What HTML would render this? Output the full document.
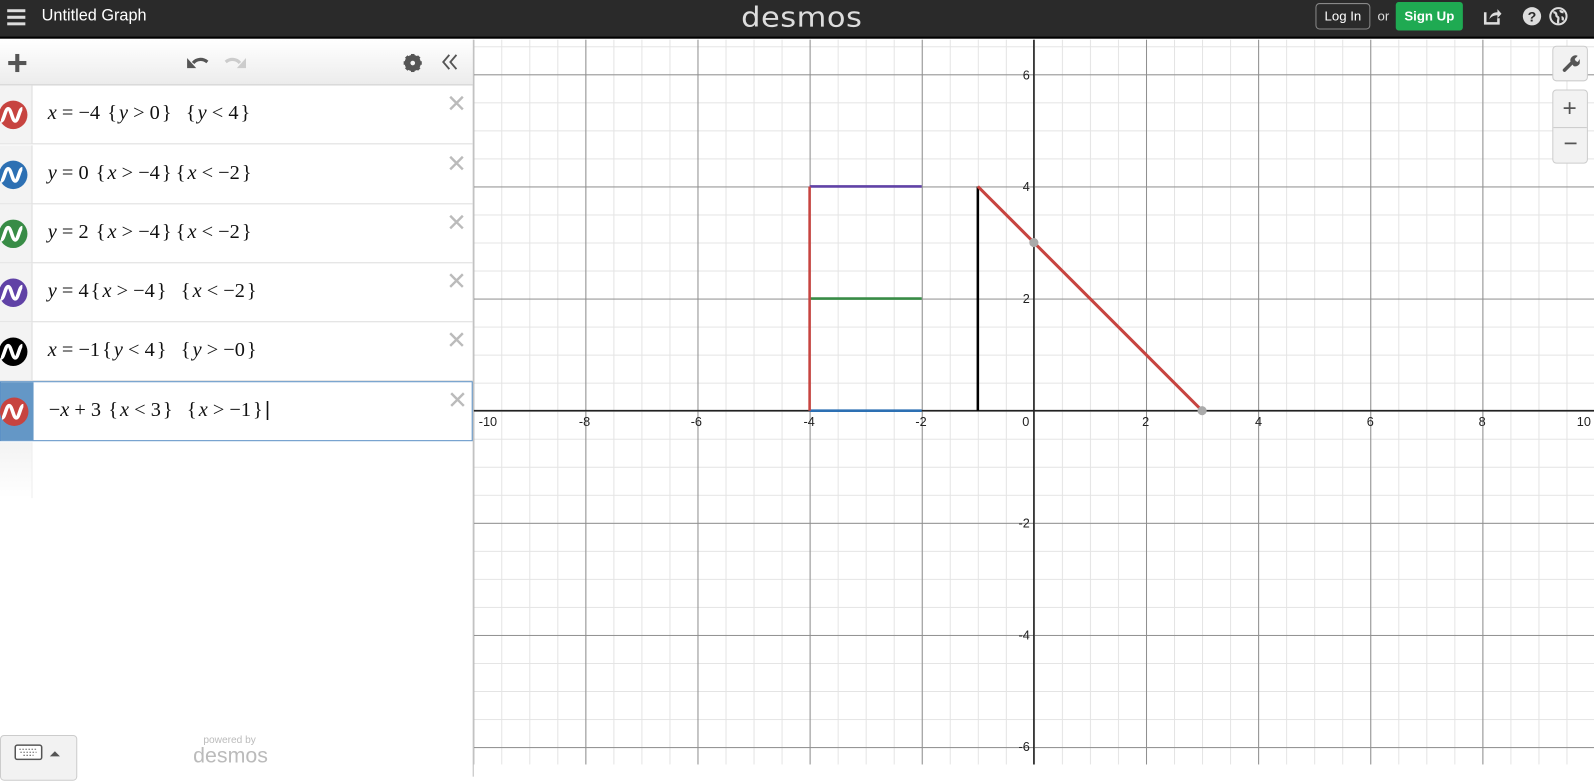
<!DOCTYPE html>
<html><head><meta charset="utf-8"><style>
*{margin:0;padding:0;box-sizing:border-box}
body{width:1594px;height:764px;overflow:hidden;font-family:"Liberation Sans",sans-serif;background:#fff;position:relative}
#w{position:absolute;left:0;top:0;width:1568px;height:752px;transform:scale(1.01658);transform-origin:0 0}
.top{position:absolute;left:0;top:0;width:1568px;height:38px;background:#2a2a2a;border-bottom:2px solid #000}
.top .title{position:absolute;left:41px;top:7px;color:#fff;font-size:16px}
.logo{position:absolute;left:729px;top:0px;color:#ddd;font-size:30px;letter-spacing:0.5px;font-family:"DejaVu Sans",sans-serif;font-weight:normal;transform:scaleY(0.9)}
.login{position:absolute;left:1294px;top:3px;width:54px;height:26px;border:1px solid #888;border-radius:4px;color:#fff;font-size:13px;text-align:center;line-height:24px}
.or{position:absolute;left:1355px;top:8px;color:#ddd;font-size:13px}
.signup{position:absolute;left:1373px;top:2px;width:66px;height:28px;background:#1faa52;border-radius:3px;color:#fff;font-size:13px;text-align:center;line-height:28px;font-weight:bold}
.panel{position:absolute;left:0;top:39px;width:466px;height:725px;background:#fff;border-right:1px solid #bbb}
.tools{position:absolute;left:0;top:0;width:465px;height:45px;background:linear-gradient(#fff,#ececec);border-bottom:1px solid #ccc}
.row{position:absolute;left:0;width:465px;height:58px;border-bottom:1px solid #ddd}
.row .side{position:absolute;left:0;top:0;width:32px;height:100%;background:#f3f3f3;border-right:1px solid #ddd}
.row .ex{position:absolute;left:47px;top:16px;font-family:"Liberation Serif",serif;font-size:20px;color:#111;white-space:pre}
.row .ex i{font-style:italic}
.o{margin:0 5px}
.b{margin:0 2px}
.row .x{position:absolute;left:439px;top:4px;color:#bbb;font-size:24px}
.row svg.ic{position:absolute;left:-1px;top:14px}
.sel{border:1px solid #5c91c6}
.sel .side{background:#6497c6;border-right:none}
.graph{position:absolute;left:466px;top:39px}
.ctrl{position:absolute;background:#f2f2f2;border:1px solid #ccc;border-radius:4px}
</style></head><body><div id="w">
<div class="top">
 <svg style="position:absolute;left:7px;top:9px" width="18" height="16"><rect y="0" width="18" height="3" fill="#ddd"/><rect y="6.5" width="18" height="3" fill="#ddd"/><rect y="13" width="18" height="3" fill="#ddd"/></svg>
 <div class="title">Untitled Graph</div>
 <div class="logo">desmos</div>
 <div class="login">Log In</div><div class="or">or</div><div class="signup">Sign Up</div>
 <svg style="position:absolute;left:1458px;top:6px" width="20" height="20" viewBox="0 0 20 20"><path d="M3 6v11h13v-5" fill="none" stroke="#ddd" stroke-width="2.5"/><path d="M7 13c1-5 4-7 8-7V3l4 4.5L15 12V9c-3 0-6 1-8 4z" fill="#ddd"/></svg>
 <svg style="position:absolute;left:1497px;top:6px" width="20" height="20"><circle cx="10" cy="10" r="9" fill="#ddd"/><text x="10" y="15" text-anchor="middle" font-family="Liberation Sans" font-weight="bold" font-size="14" fill="#2a2a2a">?</text></svg>
 <svg style="position:absolute;left:1523px;top:6px" width="20" height="20"><circle cx="10" cy="10" r="8" fill="none" stroke="#ddd" stroke-width="2"/><path d="M5 6c2 0 3 1 3 3s2 1 2 3-1 3 0 5M12 4c0 2 2 2 3 2M13 11c1 0 2 1 1 3" fill="none" stroke="#ddd" stroke-width="2.2"/></svg>
</div>
<div class="panel">
 <div class="tools">
  <svg style="position:absolute;left:8px;top:14px" width="18" height="18"><rect x="7" y="0" width="4" height="18" fill="#555"/><rect x="0" y="7" width="18" height="4" fill="#555"/></svg>
  <svg style="position:absolute;left:184px;top:15px" width="22" height="14" viewBox="0 0 22 14"><path d="M6 8c3-4 9-5 14-1" fill="none" stroke="#555" stroke-width="3.2"/><path d="M0 3v10h9z" fill="#555"/></svg>
  <svg style="position:absolute;left:220px;top:15px" width="22" height="14" viewBox="0 0 22 14"><path d="M16 8c-3-4-9-5-14-1" fill="none" stroke="#ccc" stroke-width="3.2"/><path d="M22 3v10h-9z" fill="#ccc"/></svg>
  <svg style="position:absolute;left:397px;top:14px" width="18" height="18" viewBox="0 0 18 18"><circle cx="9" cy="9" r="6" fill="none" stroke="#555" stroke-width="4"/><g stroke="#555" stroke-width="3.5"><path d="M9 0v18M0 9h18M2.6 2.6l12.8 12.8M15.4 2.6L2.6 15.4"/></g><circle cx="9" cy="9" r="2.3" fill="#f4f4f4"/></svg>
  <svg style="position:absolute;left:434px;top:13px" width="18" height="18"><path d="M8 2L2 9l6 7M15 2L9 9l6 7" fill="none" stroke="#555" stroke-width="1.8"/></svg>
 </div>
 <div class="row" style="top:45px"><div class="side"></div><svg class="ic" width="29" height="30"><circle cx="14" cy="15" r="14" fill="#c74440"/><path d="M2 21c3 0 4-12 7-12s4 12 7 12 4-12 7-12" fill="none" stroke="#fff" stroke-width="3.5"/></svg><div class="ex"><i>x</i><span class="o">=</span>−4 <span class="b">{</span><i>y</i><span class="o">&gt;</span>0<span class="b">}</span>  <span class="b">{</span><i>y</i><span class="o">&lt;</span>4<span class="b">}</span></div><div class="x">✕</div></div>
 <div class="row" style="top:104px"><div class="side"></div><svg class="ic" width="29" height="30"><circle cx="14" cy="15" r="14" fill="#2d70b3"/><path d="M2 21c3 0 4-12 7-12s4 12 7 12 4-12 7-12" fill="none" stroke="#fff" stroke-width="3.5"/></svg><div class="ex"><i>y</i><span class="o">=</span>0 <span class="b">{</span><i>x</i><span class="o">&gt;</span>−4<span class="b">}</span><span class="b">{</span><i>x</i><span class="o">&lt;</span>−2<span class="b">}</span></div><div class="x">✕</div></div>
 <div class="row" style="top:162px"><div class="side"></div><svg class="ic" width="29" height="30"><circle cx="14" cy="15" r="14" fill="#388c46"/><path d="M2 21c3 0 4-12 7-12s4 12 7 12 4-12 7-12" fill="none" stroke="#fff" stroke-width="3.5"/></svg><div class="ex"><i>y</i><span class="o">=</span>2 <span class="b">{</span><i>x</i><span class="o">&gt;</span>−4<span class="b">}</span><span class="b">{</span><i>x</i><span class="o">&lt;</span>−2<span class="b">}</span></div><div class="x">✕</div></div>
 <div class="row" style="top:220px"><div class="side"></div><svg class="ic" width="29" height="30"><circle cx="14" cy="15" r="14" fill="#6042a6"/><path d="M2 21c3 0 4-12 7-12s4 12 7 12 4-12 7-12" fill="none" stroke="#fff" stroke-width="3.5"/></svg><div class="ex"><i>y</i><span class="o">=</span>4<span class="b">{</span><i>x</i><span class="o">&gt;</span>−4<span class="b">}</span>  <span class="b">{</span><i>x</i><span class="o">&lt;</span>−2<span class="b">}</span></div><div class="x">✕</div></div>
 <div class="row" style="top:278px"><div class="side"></div><svg class="ic" width="29" height="30"><circle cx="14" cy="15" r="14" fill="#000"/><path d="M2 21c3 0 4-12 7-12s4 12 7 12 4-12 7-12" fill="none" stroke="#fff" stroke-width="3.5"/></svg><div class="ex"><i>x</i><span class="o">=</span>−1<span class="b">{</span><i>y</i><span class="o">&lt;</span>4<span class="b">}</span>  <span class="b">{</span><i>y</i><span class="o">&gt;</span>−0<span class="b">}</span></div><div class="x">✕</div></div>
 <div class="row sel" style="top:336px;height:59px"><div class="side"></div><svg class="ic" width="29" height="30"><circle cx="14" cy="15" r="14" fill="#c74440"/><path d="M2 21c3 0 4-12 7-12s4 12 7 12 4-12 7-12" fill="none" stroke="#fff" stroke-width="3.5"/></svg><div class="ex">−<i>x</i><span class="o">+</span>3 <span class="b">{</span><i>x</i><span class="o">&lt;</span>3<span class="b">}</span>  <span class="b">{</span><i>x</i><span class="o">&gt;</span>−1<span class="b">}</span><span style="font-style:normal;font-family:'Liberation Sans'">|</span></div><div class="x">✕</div></div>
 <div style="position:absolute;left:0;top:396px;width:32px;height:55px;background:linear-gradient(#f3f3f3,#fff);border-right:1px solid #eee"></div>
 <div style="position:absolute;left:0;top:684px;width:76px;height:45px;background:#f2f2f2;border:1px solid #ccc;border-radius:4px">
  <svg style="position:absolute;left:13px;top:8px" width="45" height="16"><rect x="1" y="1" width="26" height="14" rx="2" fill="#fff" stroke="#555" stroke-width="1.5"/><path d="M5 5h18M6 8h16M9 11h10" stroke="#666" stroke-dasharray="1.5 1.5"/><path d="M35 12l5-5 5 5z" fill="#555"/></svg>
 </div>
 <div style="position:absolute;left:200px;top:684px;color:#bbb;font-size:10px">powered by</div>
 <div style="position:absolute;left:190px;top:693px;color:#bbb;font-size:21px">desmos</div>
</div>
<svg class="graph" width="1102" height="713">
 <defs>
  <pattern id="mi" patternUnits="userSpaceOnUse" x="551" y="365" width="27.575" height="27.575"><path d="M0.5 0V27.575M0 0.5H27.575" stroke="#e4e4e4" stroke-width="1" fill="none"/></pattern>
  <pattern id="ma" patternUnits="userSpaceOnUse" x="551" y="365" width="110.3" height="110.3"><path d="M0.5 0V110.3M0 0.5H110.3" stroke="#8f8f8f" stroke-width="1" fill="none"/></pattern>
 </defs>
 <rect width="1102" height="713" fill="url(#mi)"/>
 <rect width="1102" height="713" fill="url(#ma)"/>
 <line x1="551" y1="0" x2="551" y2="713" stroke="#222" stroke-width="1.5"/>
 <line x1="0" y1="365" x2="1102" y2="365" stroke="#222" stroke-width="1.5"/>
 <g font-family="Liberation Sans" font-size="12.5" fill="#222" text-anchor="middle">
  <text x="14" y="380">-10</text><text x="109" y="380">-8</text><text x="219" y="380">-6</text><text x="330" y="380">-4</text><text x="440" y="380">-2</text><text x="543" y="380">0</text><text x="661" y="380">2</text><text x="772" y="380">4</text><text x="882" y="380">6</text><text x="992" y="380">8</text><text x="1092" y="380">10</text>
 </g>
 <g font-family="Liberation Sans" font-size="12.5" fill="#222" text-anchor="end">
  <text x="547" y="39">6</text><text x="547" y="149">4</text><text x="547" y="259">2</text><text x="547" y="480">-2</text><text x="547" y="590">-4</text><text x="547" y="700">-6</text>
 </g>
 <g stroke-width="2.5" fill="none">
  <line x1="330.4" y1="365" x2="440.7" y2="365" stroke="#2d70b3"/>
  <line x1="330.4" y1="254.7" x2="440.7" y2="254.7" stroke="#388c46"/>
  <line x1="330.4" y1="144.4" x2="440.7" y2="144.4" stroke="#6042a6"/>
  <line x1="330.4" y1="144.4" x2="330.4" y2="365" stroke="#c74440"/>
  <line x1="495.9" y1="144.4" x2="495.9" y2="365" stroke="#000"/>
  <line x1="495.9" y1="144.4" x2="716.5" y2="365" stroke="#c74440" stroke-width="3"/>
 </g>
 <circle cx="551" cy="199.6" r="4.5" fill="#aaa"/>
 <circle cx="716.5" cy="365" r="4.5" fill="#aaa"/>
</svg>
<div class="ctrl" style="left:1527px;top:45px;width:35px;height:35px"><svg style="position:absolute;left:8px;top:7px" width="18" height="18" viewBox="0 0 18 18"><path d="M3 16l7-7" stroke="#555" stroke-width="3.5" stroke-linecap="round"/><path d="M9 8a5 5 0 0 1 7-6l-3 3 1 2 2 1 2-3a5 5 0 0 1-6 7z" fill="#555"/></svg></div>
<div class="ctrl" style="left:1527px;top:88px;width:35px;height:73px"><div style="position:absolute;left:0;top:36px;width:33px;height:1px;background:#ccc"></div><div style="position:absolute;left:9px;top:4px;font-size:24px;color:#555">+</div><div style="position:absolute;left:10px;top:39px;font-size:24px;color:#555">−</div></div>
</div></body></html>
